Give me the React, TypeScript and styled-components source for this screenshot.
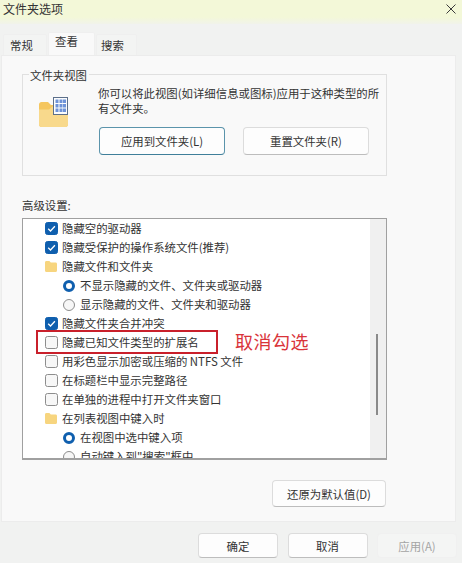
import React from 'react';
import styled, { createGlobalStyle } from 'styled-components';

const GlobalStyle = createGlobalStyle`
  html, body {
    margin: 0;
    padding: 0;
    background: #f1f2f1;
  }
  * {
    box-sizing: border-box;
  }
`;

type AdvancedRow =
  | { kind: 'check'; label: string; checked: boolean }
  | { kind: 'radio'; label: string; checked: boolean }
  | { kind: 'folder'; label: string };

const rows: AdvancedRow[] = [
  { kind: 'check', label: '隐藏空的驱动器', checked: true },
  { kind: 'check', label: '隐藏受保护的操作系统文件(推荐)', checked: true },
  { kind: 'folder', label: '隐藏文件和文件夹' },
  { kind: 'radio', label: '不显示隐藏的文件、文件夹或驱动器', checked: true },
  { kind: 'radio', label: '显示隐藏的文件、文件夹和驱动器', checked: false },
  { kind: 'check', label: '隐藏文件夹合并冲突', checked: true },
  { kind: 'check', label: '隐藏已知文件类型的扩展名', checked: false },
  { kind: 'check', label: '用彩色显示加密或压缩的 NTFS 文件', checked: false },
  { kind: 'check', label: '在标题栏中显示完整路径', checked: false },
  { kind: 'check', label: '在单独的进程中打开文件夹窗口', checked: false },
  { kind: 'folder', label: '在列表视图中键入时' },
  { kind: 'radio', label: '在视图中选中键入项', checked: true },
  { kind: 'radio', label: '自动键入到"搜索"框中', checked: false },
];

function FolderViewIcon() {
  return (
    <svg width="29" height="30" viewBox="0 0 29 30">
      <path d="M0 7.500C0 6.100 1.100 5 2.500 5H9l3 3h14.500C27.900 8 29 9.100 29 10.500V27.500c0 1.400-1.100 2.500-2.500 2.500h-24C1.100 30 0 28.900 0 27.500Z" fill="#f5c65f" />
      <path d="M0 12.500h10L13.500 9.500H29v18c0 1.400-1.100 2.500-2.500 2.500h-24C1.100 30 0 28.900 0 27.500Z" fill="#f8d98c" />
      <rect x="14.500" y="0.500" width="14" height="17" fill="#fbfcfd" stroke="#5c6f8a" />
      <g fill="#6f93d8">
        <rect x="16.500" y="2.500" width="3" height="3.500" />
        <rect x="20.500" y="2.500" width="3" height="3.500" />
        <rect x="24" y="2.500" width="3" height="3.500" />
        <rect x="16.500" y="7" width="3" height="3.500" />
        <rect x="20.500" y="7" width="3" height="3.500" />
        <rect x="24" y="7" width="3" height="3.500" />
        <rect x="16.500" y="11.500" width="3" height="3.500" />
        <rect x="20.500" y="11.500" width="3" height="3.500" />
        <rect x="24" y="11.500" width="3" height="3.500" />
      </g>
    </svg>
  );
}

function SmallFolderIcon() {
  return (
    <svg width="12" height="11" viewBox="0 0 12 11">
      <path d="M0 1.500C0 .7.600 0 1.400 0h3l1.400 1.600h4.800c.8 0 1.400.6 1.400 1.400v6.500c0 .8-.6 1.500-1.400 1.500H1.400C.6 11 0 10.300 0 9.500Z" fill="#f7d57f" />
    </svg>
  );
}

function CheckMark() {
  return (
    <svg width="11" height="11" viewBox="0 0 11 11">
      <path d="M2.200 5.800 4.500 8 8.900 3.200" fill="none" stroke="#ffffff" strokeWidth="1.300" />
    </svg>
  );
}

export default function App() {
  return (
    <>
      <GlobalStyle />
      <Dialog>
        <TitleBar>
          <Title>文件夹选项</Title>
          <CloseIcon width="10" height="10" viewBox="0 0 10 10">
            <path d="M.5.500l9 9M9.500.500l-9 9" stroke="#3a3a3a" strokeWidth="1" fill="none" />
          </CloseIcon>
        </TitleBar>

        <TabStrip>
          <Tab $width={44} $inset={6}>常规</Tab>
          <Tab $width={47} $inset={6} $active>查看</Tab>
          <Tab $width={41} $inset={4}>搜索</Tab>
        </TabStrip>

        <Panel>
          <GroupBox>
            <Legend>文件夹视图</Legend>
            <FolderSlot>
              <FolderViewIcon />
            </FolderSlot>
            <GroupBody>
              <Description>你可以将此视图(如详细信息或图标)应用于这种类型的所有文件夹。</Description>
              <GroupButtons>
                <Button $width={126} $height={28} $primary>应用到文件夹(L)</Button>
                <Button $width={126} $height={28}>重置文件夹(R)</Button>
              </GroupButtons>
            </GroupBody>
          </GroupBox>

          <SectionLabel>高级设置:</SectionLabel>
          <ListBox>
            <ListRows>
              {rows.map((row) => (
                <Row key={row.label} $indent={row.kind === 'radio'}>
                  {row.kind === 'check' && (
                    <CheckBox $checked={row.checked}>{row.checked && <CheckMark />}</CheckBox>
                  )}
                  {row.kind === 'radio' && <Radio $checked={row.checked} />}
                  {row.kind === 'folder' && (
                    <FolderCell>
                      <SmallFolderIcon />
                    </FolderCell>
                  )}
                  <RowLabel>{row.label}</RowLabel>
                </Row>
              ))}
            </ListRows>
            <ScrollTrack>
              <ScrollThumb />
            </ScrollTrack>
            <Highlight />
            <Annotation>取消勾选</Annotation>
          </ListBox>

          <RestoreRow>
            <Button $width={114} $height={27}>还原为默认值(D)</Button>
          </RestoreRow>
        </Panel>

        <Footer>
          <Button $width={80} $height={25}>确定</Button>
          <Button $width={80} $height={25}>取消</Button>
          <Button $width={80} $height={25} $disabled>应用(A)</Button>
        </Footer>
      </Dialog>
    </>
  );
}

const Dialog = styled.div`
  width: 462px;
  height: 563px;
  overflow: hidden;
  display: flex;
  flex-direction: column;
  background: #f1f2f1;
  color: #333333;
  font-family: 'Noto Sans CJK SC', 'Liberation Sans', sans-serif;
  font-size: 11.4px;
`;

const TitleBar = styled.div`
  height: 24px;
  flex: none;
  display: flex;
  align-items: center;
  justify-content: space-between;
  padding: 0 6px 7px 3px;
  background: linear-gradient(#f3f8d8 0, #f3f8d8 17px, #f1f3ea 24px);
`;

const Title = styled.div`
  font-size: 12px;
  line-height: 16px;
`;

const CloseIcon = styled.svg`
  display: block;
`;

const TabStrip = styled.div`
  height: 31px;
  flex: none;
  display: flex;
  align-items: flex-end;
  padding-left: 3px;
  gap: 1px;
`;

const Tab = styled.div<{ $width: number; $inset: number; $active?: boolean }>`
  width: ${(p) => p.$width}px;
  height: ${(p) => (p.$active ? '23px' : '21px')};
  padding-left: ${(p) => p.$inset}px;
  padding-bottom: ${(p) => (p.$active ? '6px' : '1px')};
  display: flex;
  align-items: center;
  background: ${(p) => (p.$active ? '#f9f9f9' : '#f3f4f3')};
  border: 1px solid #efefef;
  border-bottom: none;
  border-radius: 2px 2px 0 0;
`;

const Panel = styled.div`
  width: 455px;
  height: 467px;
  flex: none;
  margin-left: 1px;
  padding: 18px 0 0 20px;
  display: flex;
  flex-direction: column;
  background: #f9f9f9;
  border: 1px solid #ececec;
`;

const GroupBox = styled.div`
  position: relative;
  width: 365px;
  height: 102px;
  flex: none;
  display: flex;
  border: 1px solid #e0e0e0;
`;

const Legend = styled.div`
  position: absolute;
  left: 6px;
  top: -8px;
  padding: 0 2px 0 1px;
  line-height: 16px;
  background: #f9f9f9;
`;

const FolderSlot = styled.div`
  width: 75px;
  flex: none;
  padding: 22px 0 0 16px;
`;

const GroupBody = styled.div`
  display: flex;
  flex-direction: column;
  padding-top: 11px;
  min-width: 0;
`;

const Description = styled.div`
  width: 284px;
  line-height: 15px;
`;

const GroupButtons = styled.div`
  display: flex;
  gap: 18px;
  margin: 11px 0 0 1px;
`;

const Button = styled.div<{ $width: number; $height: number; $primary?: boolean; $disabled?: boolean }>`
  width: ${(p) => p.$width}px;
  height: ${(p) => p.$height}px;
  flex: none;
  display: flex;
  align-items: center;
  justify-content: center;
  border-radius: 4px;
  background: ${(p) => (p.$disabled ? '#f4f5f4' : '#fdfdfd')};
  color: ${(p) => (p.$disabled ? '#a4a4a4' : '#333333')};
  border: 1px solid ${(p) => (p.$primary ? '#5b94ab' : p.$disabled ? '#f0f0f0' : '#dcdcdc')};
  border-bottom-color: ${(p) => (p.$primary ? '#3f7f9a' : p.$disabled ? '#f0f0f0' : '#bdbdbd')};
`;

const SectionLabel = styled.div`
  margin-top: 21px;
  line-height: 16px;
  height: 21px;
  flex: none;
`;

const ListBox = styled.div`
  position: relative;
  width: 365px;
  height: 242px;
  flex: none;
  display: flex;
  overflow: hidden;
  background: #ffffff;
  border: 1px solid #a0a0a0;
  border-bottom-width: 2px;
`;

const ListRows = styled.div`
  flex: 1;
  min-width: 0;
`;

const Row = styled.div<{ $indent?: boolean }>`
  height: 19px;
  display: flex;
  align-items: center;
  gap: ${(p) => (p.$indent ? '5px' : '4px')};
  padding-left: ${(p) => (p.$indent ? '40px' : '22px')};
  white-space: nowrap;
`;

const CheckBox = styled.div<{ $checked: boolean }>`
  width: 13px;
  height: 13px;
  flex: none;
  display: flex;
  align-items: center;
  justify-content: center;
  border-radius: 2.500px;
  background: ${(p) => (p.$checked ? '#0f5fae' : '#f7f7f7')};
  border: 1px solid ${(p) => (p.$checked ? '#0f5fae' : '#8d8d8d')};
`;

const Radio = styled.div<{ $checked: boolean }>`
  width: 12px;
  height: 12px;
  flex: none;
  border-radius: 50%;
  background: ${(p) => (p.$checked ? '#ffffff' : '#f7f7f7')};
  border: ${(p) => (p.$checked ? '3.500px solid #0f5fae' : '1px solid #8d8d8d')};
`;

const FolderCell = styled.div`
  width: 13px;
  flex: none;
  display: flex;
`;

const RowLabel = styled.span`
  line-height: 19px;
`;

const ScrollTrack = styled.div`
  width: 16px;
  flex: none;
  padding: 115px 0 0 6px;
  background: #f0f0f0;
`;

const ScrollThumb = styled.div`
  width: 2px;
  height: 81px;
  background: #8a8a8a;
`;

const Highlight = styled.div`
  position: absolute;
  left: 13px;
  top: 111px;
  width: 182px;
  height: 24px;
  border: 2px solid #c9202b;
`;

const Annotation = styled.div`
  position: absolute;
  left: 212px;
  top: 110px;
  font-size: 18px;
  line-height: 25px;
  color: #d9343a;
  letter-spacing: 0.500px;
`;

const RestoreRow = styled.div`
  width: 364px;
  display: flex;
  justify-content: flex-end;
  margin-top: 20px;
`;

const Footer = styled.div`
  flex: 1;
  display: flex;
  justify-content: flex-end;
  gap: 9.5px;
  padding: 11px 5px 0 0;
`;
